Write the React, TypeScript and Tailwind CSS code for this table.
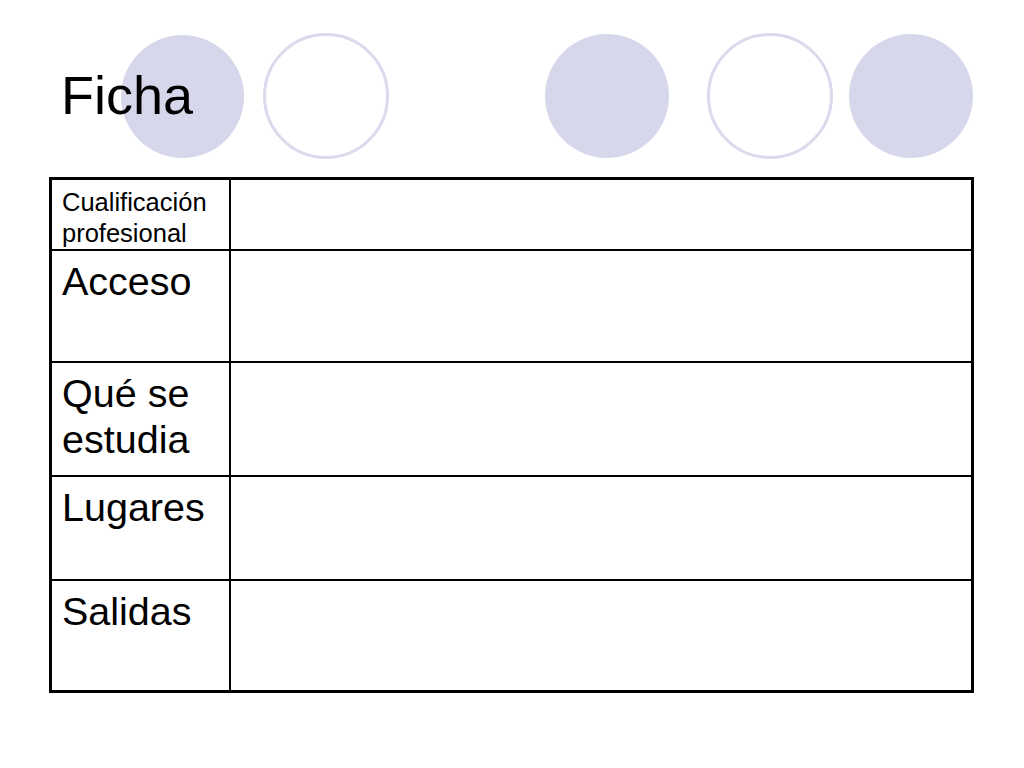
import React from "react";

const rows = [
  { label: "Cualificación profesional", small: true, h: "h-[69px]" },
  { label: "Acceso", small: false, h: "h-[110px]" },
  { label: "Qué se estudia", small: false, h: "h-[112px]" },
  { label: "Lugares", small: false, h: "h-[102px]" },
  { label: "Salidas", small: false, h: "h-[109px]" },
];

export default function App() {
  return (
    <div
      className="w-[1024px] h-[768px] bg-white text-black overflow-hidden"
      style={{ fontFamily: '"Liberation Sans", Arial, sans-serif' }}
    >
      <div className="relative h-[177px]">
        <div className="flex items-center pt-[33px] pl-[121px]">
          <div className="w-[123px] h-[123px] rounded-full bg-[#d7d7ec]" />
          <div className="ml-[19px] w-[126px] h-[126px] rounded-full border-[3px] border-[#dadaed]" />
          <div className="ml-[156px] w-[124px] h-[124px] rounded-full bg-[#d7d7ec]" />
          <div className="ml-[38px] w-[126px] h-[126px] rounded-full border-[3px] border-[#dadaed]" />
          <div className="ml-[16px] w-[124px] h-[124px] rounded-full bg-[#d7d7ec]" />
        </div>
        <h1 className="absolute left-[61px] top-[68px] text-[54px] leading-[54px] font-normal">
          Ficha
        </h1>
      </div>
      <div className="ml-[49px] w-[925px] border-[3px] border-black flex flex-col">
        {rows.map((r, i) => (
          <div
            key={i}
            className={`flex ${r.h} ${i > 0 ? "border-t-2 border-black" : ""}`}
            style={i > 0 ? { boxSizing: "content-box" } : undefined}
          >
            <div className="w-[179px] border-r-2 border-black pl-[10px] pt-[7px] pr-2">
              {r.small ? (
                <div className="text-[25.5px] leading-[31px] w-[155px]">{r.label}</div>
              ) : (
                <div className="text-[39.5px] leading-[46px]">{r.label}</div>
              )}
            </div>
            <div className="flex-1" />
          </div>
        ))}
      </div>
    </div>
  );
}
